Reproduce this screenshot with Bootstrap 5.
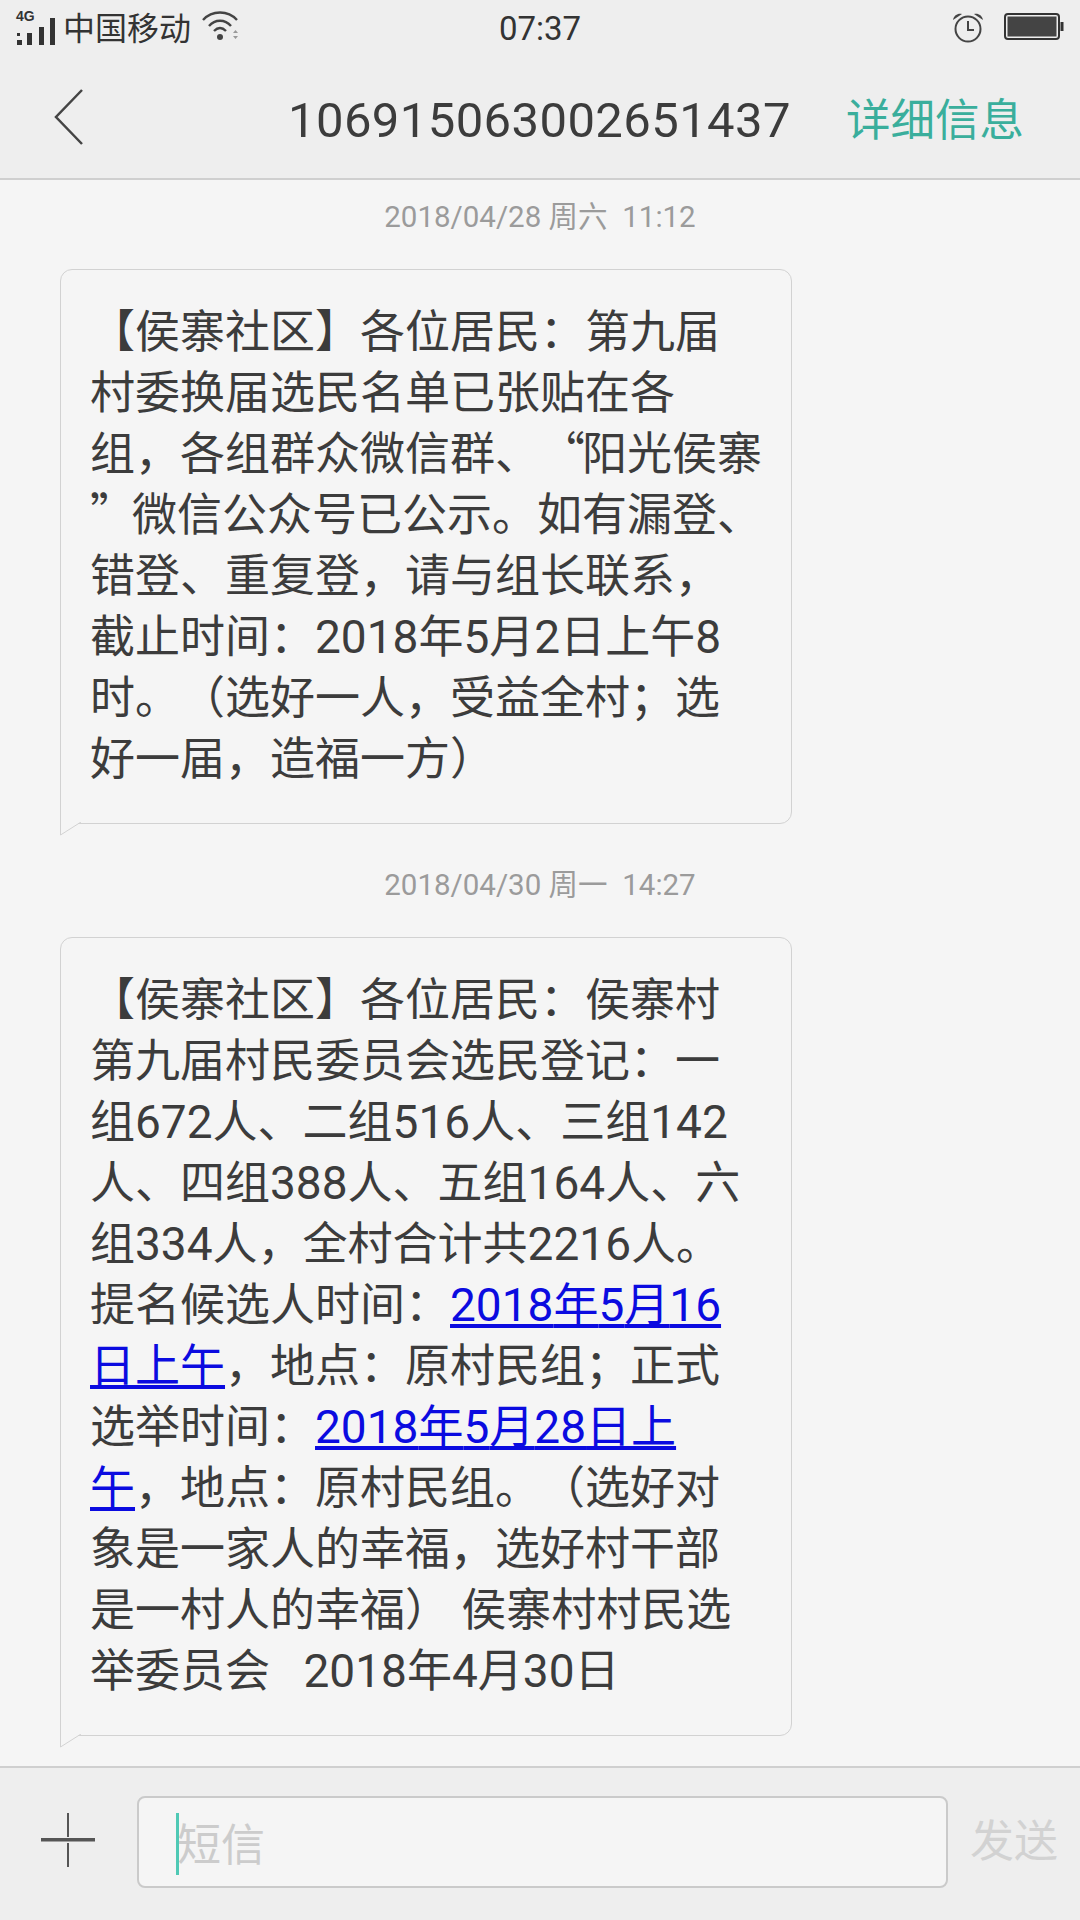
<!DOCTYPE html>
<html lang="zh-CN">
<head>
  <meta charset="UTF-8">
  <title>短信</title>
  <link href="https://cdn.jsdelivr.net/npm/bootstrap@5.3.0/dist/css/bootstrap.min.css" rel="stylesheet">
  <style>
  body {
    width: 1080px;
    height: 1920px;
    overflow: hidden;
    background-color: #f5f5f5;
    font-family: Roboto, "Noto Sans CJK SC", sans-serif;
    color: #3c3c3c;
    text-spacing-trim: space-all;
  }
  .phone { height: 1920px; }
  .top-area {
    height: 180px;
    background-color: #eeeeee;
    border-bottom: 2px solid #cfcfcf;
  }
  .status-row { height: 56px; padding: 0 16px 0 16px; font-size: 33px; color: #333; position: relative; }
  .carrier { font-family: "Noto Sans CJK SC", sans-serif; font-size: 32px; line-height: 1; margin-top: -5px; }
  .clock { position: absolute; left: 0; right: 0; top: 9px; text-align: center; line-height: 40px; }
  .signal-wrap { position: relative; width: 47px; height: 40px; margin-top: -4px; }
  .net-tag { position: absolute; left: 0; top: 3px; font: bold 14px/1 "Liberation Sans", sans-serif; }
  .wifi-icon { margin: -6px 0 0 10px; }
  .batt-icon { margin: -2px 0 0 20px; }
  .title-row { height: 122px; padding: 0 56px 0 54px; }
  .sender { font-size: 49px; letter-spacing: .4px; position: absolute; left: 288px; top: 91px; line-height: 60px; }
  .detail-link { font-family: "Noto Sans CJK SC", sans-serif; font-size: 44.5px; color: #3aae9c; text-decoration: none; line-height: 60px; }
  .thread { padding: 17px 60px 0; }
  .stamp { font-size: 29.5px; line-height: 40px; color: #9b9b9b; text-align: center; width: 960px; }
  .stamp + .bubble { margin-top: 32px; }
  .stamp.later { margin-top: 41px; }
  .bubble {
    position: relative;
    width: 732px;
    padding: 32px 20px 33px 29px;
    background-color: #f5f5f5;
    border: 1px solid #d2d2d2;
    border-radius: 12px 12px 12px 0;
    font-size: 45px;
    line-height: 61px;
    white-space: nowrap;
  }
  .bubble a { color: #0b0be0; }
  .cjk { font-family: "Noto Sans CJK SC", sans-serif; line-height: 0; }
  .quote-mark { letter-spacing: -3px; }
  .num { font-size: 46px; line-height: 0; }
  .tail { position: absolute; left: -1px; bottom: -13px; width: 22px; height: 14px; }
  .composer {
    height: 154px;
    background-color: #eeeeee;
    border-top: 2px solid #cfcfcf;
    padding: 28px 10px 0 0;
  }
  .plus-box { width: 137px; height: 87px; padding-right: 2px; }
  .msg-box {
    position: relative;
    width: 811px;
    height: 92px;
    background-color: #f5f5f5;
    border: 2px solid #cacaca;
    border-radius: 8px;
    padding-left: 38px;
    font-family: "Noto Sans CJK SC", sans-serif;
    font-size: 44px;
    line-height: 88px;
    color: #cccccc;
  }
  .caret-mark { position: absolute; left: 37px; top: 15px; width: 3px; height: 62px; background-color: #4fc9b5; }
  .send-word { font-family: "Noto Sans CJK SC", sans-serif; font-size: 44px; color: #d2d2d2; margin-left: 22px; line-height: 88px; margin-top: -2px; }
  </style>
</head>
<body>
  <div class="phone d-flex flex-column">
    <div class="top-area">
      <div class="status-row d-flex align-items-center">
        <div class="signal-wrap">
          <span class="net-tag">4G</span>
          <svg width="44" height="40" viewBox="0 0 44 40" fill="#333">
            <rect x="1" y="20" width="3" height="3"/>
            <rect x="1" y="27" width="5" height="5"/>
            <rect x="11" y="20" width="5" height="12"/>
            <rect x="23" y="14" width="5" height="18"/>
            <rect x="34" y="5" width="5" height="27"/>
          </svg>
        </div>
        <span class="carrier">中国移动</span>
        <svg class="wifi-icon" width="40" height="32" viewBox="0 0 40 32" fill="none" stroke="#444" stroke-width="2.4">
          <path d="M2 11 C11 1 27 1 36 11"/>
          <path d="M8 17 C14 10 24 10 30 17"/>
          <path d="M13 22 C17 18 21 18 25 22"/>
          <circle cx="19" cy="28" r="3" fill="#444" stroke="none"/>
          <path d="M32 24 l2.5 -3 2.5 3 z M32 27 l2.5 3 2.5 -3 z" fill="#999" stroke="none"/>
        </svg>
        <span class="clock">07:37</span>
        <svg class="ms-auto" width="32" height="30" viewBox="0 0 32 30" fill="none" stroke="#444" stroke-width="2">
          <circle cx="16" cy="16" r="12.5"/>
          <path d="M16 8 V17 H22"/>
          <path d="M1 7 C2 2 6 0 10 1 Z M31 7 C30 2 26 0 22 1 Z" fill="#444" stroke="none"/>
        </svg>
        <svg class="batt-icon" width="60" height="28" viewBox="0 0 60 28">
          <rect x="1" y="1" width="54" height="25" rx="3" fill="none" stroke="#333" stroke-width="2"/>
          <rect x="3.5" y="3.5" width="49" height="20" fill="#444"/>
          <rect x="56.5" y="9" width="3" height="9" fill="#333"/>
        </svg>
      </div>
      <div class="title-row d-flex align-items-center justify-content-between">
        <svg width="30" height="56" viewBox="0 0 30 56" fill="none" stroke="#444" stroke-width="2.5">
          <path d="M28 1 L2 28 L28 55"/>
        </svg>
        <span class="sender">106915063002651437</span>
        <a class="detail-link" href="#">详细信息</a>
      </div>
    </div>

    <div class="thread flex-grow-1">
      <div class="stamp">2018/04/28 <span class="cjk">周六</span>&nbsp; 11:12</div>
      <div class="bubble">
        【侯寨社区】各位居民：第九届<br>
        村委换届选民名单已张贴在各<br>
        组，各组群众微信群、<span class="cjk quote-mark">“</span>阳光侯寨<br>
        <span class="cjk quote-mark">”</span>微信公众号已公示。如有漏登、<br>
        错登、重复登，请与组长联系，<br>
        截止时间：<span class="num">2018</span>年<span class="num">5</span>月<span class="num">2</span>日上午<span class="num">8</span><br>
        时。（选好一人，受益全村；选<br>
        好一届，造福一方）
        <svg class="tail" viewBox="0 0 22 14"><path d="M.5 0 V13 L21 0" fill="#f5f5f5" stroke="#d2d2d2" stroke-width="1"/></svg>
      </div>
      <div class="stamp later">2018/04/30 <span class="cjk">周一</span>&nbsp; 14:27</div>
      <div class="bubble">
        【侯寨社区】各位居民：侯寨村<br>
        第九届村民委员会选民登记：一<br>
        组<span class="num">672</span>人、二组<span class="num">516</span>人、三组<span class="num">142</span><br>
        人、四组<span class="num">388</span>人、五组<span class="num">164</span>人、六<br>
        组<span class="num">334</span>人，全村合计共<span class="num">2216</span>人。<br>
        提名候选人时间：<a href="#"><span class="num">2018</span>年<span class="num">5</span>月<span class="num">16</span></a><br>
        <a href="#">日上午</a>，地点：原村民组；正式<br>
        选举时间：<a href="#"><span class="num">2018</span>年<span class="num">5</span>月<span class="num">28</span>日上</a><br>
        <a href="#">午</a>，地点：原村民组。（选好对<br>
        象是一家人的幸福，选好村干部<br>
        是一村人的幸福）&nbsp;侯寨村村民选<br>
        举委员会&nbsp;&nbsp;&nbsp;<span class="num">2018</span>年<span class="num">4</span>月<span class="num">30</span>日
        <svg class="tail" viewBox="0 0 22 14"><path d="M.5 0 V13 L21 0" fill="#f5f5f5" stroke="#d2d2d2" stroke-width="1"/></svg>
      </div>
    </div>

    <div class="composer d-flex align-items-start">
      <div class="plus-box d-flex align-items-center justify-content-center">
        <svg width="54" height="54" viewBox="0 0 54 54">
          <rect x="26" y="0" width="2" height="24" fill="#555"/>
          <rect x="26" y="30" width="2" height="24" fill="#555"/>
          <rect x="0" y="25" width="54" height="3.5" fill="#555"/>
        </svg>
      </div>
      <div class="msg-box">短信<span class="caret-mark"></span></div>
      <span class="send-word">发送</span>
    </div>
  </div>
</body>
</html>
